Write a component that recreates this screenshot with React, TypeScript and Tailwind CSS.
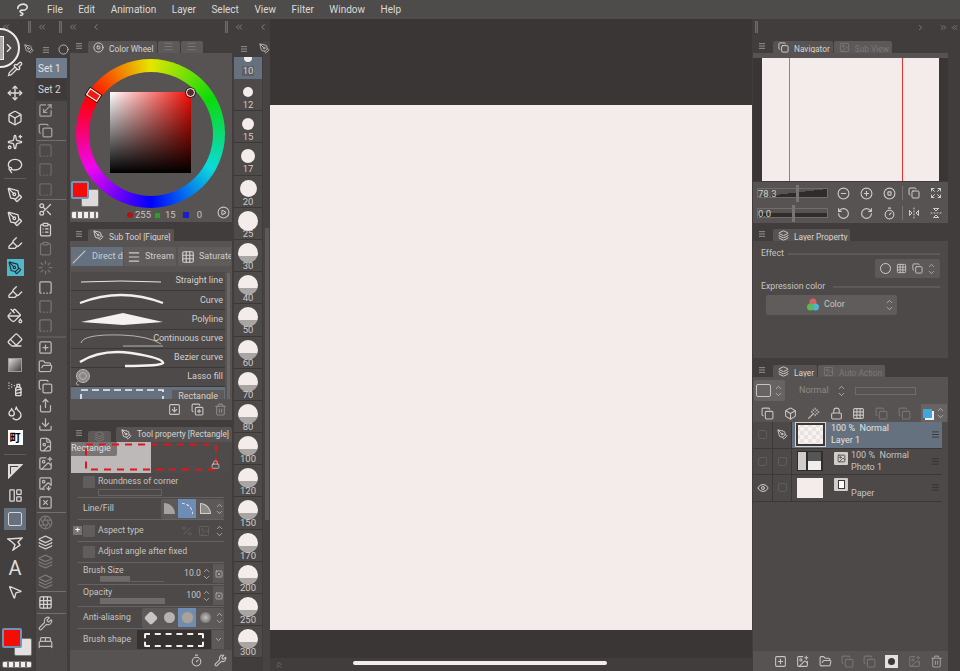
import {
  Pipette, Move, Box, Lasso, PenTool, Highlighter, PaintBucket, Eraser, SprayCan, Droplets, Wand,
  LayoutPanelLeft, MousePointer2, Scissors, ClipboardList, Clipboard, Loader, SquareDashedBottom,
  SquarePlus, FolderOpen, Copy, Share, Download, FileImage, ImagePlus, SquareX, Aperture, Layers,
  Wrench, BedDouble, Menu, ChevronUp, ChevronDown, ChevronRight, ChevronsLeft, ChevronsRight,
  ChevronLeft, CircleMinus, CirclePlus, CircleStop, RotateCcw, RotateCw, Timer, Scaling, Expand,
  FlipHorizontal2, FlipVertical2, Lock, Eye, Trash2, SquareArrowDown, CopyPlus, CirclePlay,
  Slash, Grid3x3, ImageDown, Image, Percent, Circle, Sparkles,
} from "lucide-react";

const menus = ["File", "Edit", "Animation", "Layer", "Select", "View", "Filter", "Window", "Help"];

const sizes = [
  { n: 12, c: "w-[10px] h-[10px]" },
  { n: 15, c: "w-[12px] h-[12px]" },
  { n: 17, c: "w-[14px] h-[14px]" },
  { n: 20, c: "w-[17px] h-[17px]" },
  { n: 25, c: "w-[20px] h-[20px]" },
  { n: 30, c: "w-[20px] h-[20px]" },
  { n: 40, c: "w-[20px] h-[20px]" },
  { n: 50, c: "w-[20px] h-[20px]" },
  { n: 60, c: "w-[20px] h-[20px]" },
  { n: 70, c: "w-[20px] h-[20px]" },
  { n: 80, c: "w-[20px] h-[20px]" },
  { n: 100, c: "w-[20px] h-[20px]" },
  { n: 120, c: "w-[20px] h-[20px]" },
  { n: 150, c: "w-[20px] h-[20px]" },
  { n: 170, c: "w-[20px] h-[20px]" },
  { n: 200, c: "w-[20px] h-[20px]" },
  { n: 250, c: "w-[20px] h-[20px]" },
  { n: 300, c: "w-[20px] h-[20px]" },
];

function Handle() {
  return <div className="h-[12px] w-[3px] border-x border-[#6d6a68] bg-[#575453]" />;
}

function Updown({ className = "" }: { className?: string }) {
  return (
    <div className={`flex flex-col items-center justify-center -space-y-[2px] text-[#c4c1bf] ${className}`}>
      <ChevronUp size={9} />
      <ChevronDown size={9} />
    </div>
  );
}

function Tab({ children, active = true }: { children: React.ReactNode; active?: boolean }) {
  return (
    <div
      className={`flex h-[12px] items-end gap-[5px] rounded-t-[2px] pr-[3px] pl-[5px] text-[8.3px] leading-[8px] whitespace-nowrap ${
        active ? "bg-[#565352] text-[#d6d3d1]" : "bg-[#5c5958] text-[#7b7876]"
      }`}
    >
      {children}
    </div>
  );
}

function ToolRow({ children }: { children: React.ReactNode }) {
  return <div className="flex h-[24.3px] w-full shrink-0 items-center justify-center pr-[4px]">{children}</div>;
}

function ToolStrip() {
  const ic = "text-[#dedbd9]";
  return (
    <div className="flex w-[34px] shrink-0 flex-col bg-[#423f3e]">
      <div className="flex h-[16px] shrink-0 items-center justify-end">
        <PenTool size={10} className="text-[#bdbab8]" />
      </div>
      <ToolRow><Pipette size={16} className={ic} /></ToolRow>
      <ToolRow><Move size={16} className={ic} /></ToolRow>
      <ToolRow><Box size={16} className={ic} /></ToolRow>
      <ToolRow><Sparkles size={16} className={ic} /></ToolRow>
      <ToolRow><Lasso size={16} className={ic} /></ToolRow>
      <div className="flex h-[4px] shrink-0 items-start pl-[4px]"><div className="h-px w-[22px] bg-[#5e5b5a]" /></div>
      <ToolRow><PenTool size={16} className={ic} /></ToolRow>
      <ToolRow><PenTool size={16} className={ic} /></ToolRow>
      <ToolRow><Highlighter size={16} className={ic} /></ToolRow>
      <ToolRow>
        <div className="flex h-[17px] w-[17px] items-center justify-center bg-[#4fb8cb]">
          <PenTool size={14} className="text-[#1f3238]" />
        </div>
      </ToolRow>
      <ToolRow><Highlighter size={16} className={ic} /></ToolRow>
      <ToolRow><PaintBucket size={16} className={ic} /></ToolRow>
      <ToolRow><Eraser size={16} className={ic} /></ToolRow>
      <ToolRow><div className="h-[14px] w-[14px] border border-[#9d9a98] bg-gradient-to-br from-[#dddbd9] to-[#444140]" /></ToolRow>
      <ToolRow><SprayCan size={16} className={ic} /></ToolRow>
      <ToolRow><Droplets size={16} className={ic} /></ToolRow>
      <ToolRow>
        <div className="flex h-[15px] w-[15px] items-center justify-center bg-white font-['Noto_Sans_CJK_JP',sans-serif] text-[11px] leading-none font-bold text-black">
          町
        </div>
      </ToolRow>
      <div className="flex h-[9px] shrink-0 items-center pl-[4px]"><div className="h-px w-[22px] bg-[#5e5b5a]" /></div>
      <ToolRow>
        <svg width="16" height="16" viewBox="0 0 16 16" className="text-[#dedbd9]" fill="none" stroke="currentColor" strokeWidth="2">
          <path d="M2 14 L2 2 L14 2 Z M5 5 L9 5 L5 9 Z" />
        </svg>
      </ToolRow>
      <ToolRow><LayoutPanelLeft size={15} className={ic} /></ToolRow>
      <ToolRow>
        <div className="flex h-[22px] w-[22px] items-center justify-center bg-[#66717f]">
          <div className="h-[14px] w-[14px] rounded-[2px] border border-[#d8d5d3]" />
        </div>
      </ToolRow>
      <ToolRow>
        <svg width="16" height="14" viewBox="0 0 16 14" className="text-[#dedbd9]" fill="none" stroke="currentColor" strokeWidth="1.4">
          <path d="M1 2 L15 1 L11 5 L13 8 L6 13 L8 8 L5 5 Z" />
        </svg>
      </ToolRow>
      <ToolRow><span className="font-['Roboto',sans-serif] text-[20px] leading-none text-[#dedbd9]">A</span></ToolRow>
      <ToolRow><MousePointer2 size={16} className={ic} /></ToolRow>
      <div className="mt-auto mb-[3px] w-full shrink-0">
        <div className="relative h-[34px]">
          <div className="absolute top-[11px] left-[14px] h-[18px] w-[18px] rounded-[2px] border border-[#777] bg-[#e4e0df]" />
          <div className="absolute top-[1px] left-[2px] h-[20px] w-[20px] rounded-[2px] border-2 border-[#6f93bd] bg-[#f20d05]" />
        </div>
        <div className="mx-[2px] h-[7px] rounded-[2px] border border-[#77746f] bg-[repeating-linear-gradient(90deg,#f1efee_0_4px,#6f6c6b_4px_6px)]" />
      </div>
    </div>
  );
}

function SetRow({ children, h = "h-[19.4px]" }: { children: React.ReactNode; h?: string }) {
  return <div className={`flex ${h} items-center justify-center pr-[12px]`}>{children}</div>;
}

function ToolSets() {
  const sep = <div className="mx-[1px] h-px bg-[#716e6c]" />;
  const g3 = [Clipboard, Loader, SquareDashedBottom, SquareDashedBottom, SquareDashedBottom];
  const g4 = [SquarePlus, FolderOpen, Copy, Share, Download, FileImage, ImagePlus, ImageDown, SquareX];
  return (
    <div className="ml-[2px] flex w-[31px] shrink-0 flex-col">
      <div className="flex h-[17px] shrink-0 items-center justify-between pl-[6px] text-[#bdbab8]">
        <Menu size={8} />
        <Circle size={11} className="-mr-[2px]" />
      </div>
      <div className="flex h-[20px] shrink-0 items-center bg-[#6f7c8d] pl-[2px] text-[10px] text-[#e3e1df]">Set 1</div>
      <div className="mt-[1px] flex h-[20px] shrink-0 items-center bg-[#3d3a39] pl-[2px] text-[10px] text-[#d6d3d1]">Set 2</div>
      <div className="mt-[2px] flex-1 bg-[#4c4948]">
        <SetRow><Scaling size={15} className="text-[#a5a2a0]" /></SetRow>
        <SetRow><Copy size={15} className="text-[#a5a2a0]" /></SetRow>
        {sep}
        {[0, 1, 2].map((i) => (
          <SetRow key={i}><SquareDashedBottom size={15} className="text-[#6b6867]" /></SetRow>
        ))}
        {sep}
        <SetRow><Scissors size={15} className="text-[#d4d1cf]" /></SetRow>
        <SetRow><ClipboardList size={15} className="text-[#d4d1cf]" /></SetRow>
        {g3.map((I, i) => (
          <SetRow key={i}><I size={15} className={i === 2 ? "text-[#bdbab8]" : "text-[#777472]"} /></SetRow>
        ))}
        <div className="mx-[1px] h-[2px] bg-[#5c5958]" />
        {g4.map((I, i) => (
          <SetRow key={i}><I size={15} className="text-[#bdbab8]" /></SetRow>
        ))}
        {sep}
        <SetRow><Aperture size={15} className="text-[#7b7876]" /></SetRow>
        <SetRow><Layers size={15} className="text-[#d0cdcb]" /></SetRow>
        <SetRow><Layers size={15} className="text-[#7b7876]" /></SetRow>
        <SetRow><Layers size={15} className="text-[#7b7876]" /></SetRow>
        {sep}
        <SetRow h="h-[21px]"><Grid3x3 size={15} className="text-[#d4d1cf]" /></SetRow>
        {sep}
        <SetRow><Wrench size={15} className="text-[#bdbab8]" /></SetRow>
        <SetRow><BedDouble size={15} className="text-[#bdbab8]" /></SetRow>
      </div>
    </div>
  );
}

function ColorWheel() {
  return (
    <div className="relative flex h-[169px] flex-col items-center bg-[#565352] pt-[6px] pr-[1px]">
      <div className="relative h-[149px] w-[149px] shrink-0 rounded-full bg-[conic-gradient(hsl(60,100%,45%),hsl(120,90%,45%),hsl(180,90%,45%),hsl(240,100%,50%),hsl(300,95%,48%),hsl(360,100%,50%),hsl(60,100%,45%))]">
        <div className="absolute inset-[12.5px] rounded-full bg-[#565352]" />
        <div className="absolute top-[33px] left-[34px] h-[81px] w-[81px] bg-[linear-gradient(to_top,#000,transparent),linear-gradient(to_right,#fff,#f20d05)]" />
        <div className="absolute top-[28.5px] left-[110px] h-[9px] w-[9px] rounded-full border border-white bg-[#5a2a26] ring-1 ring-black/50" />
        <div className="absolute top-[32px] left-[10.5px] h-[8px] w-[13px] rotate-[33deg] border border-white bg-[#ee1b14] ring-1 ring-black/70" />
      </div>
      <div className="absolute bottom-[14px] left-[1px] h-[27px] w-[30px]">
        <div className="absolute top-[8px] left-[10px] h-[18px] w-[18px] rounded-[2px] border border-[#777] bg-[#dedad9]" />
        <div className="absolute top-0 left-0 h-[18px] w-[18px] rounded-[2px] border-2 border-[#7096c4] bg-[#f20d05]" />
      </div>
      <div className="flex h-[14px] w-full items-center text-[9.5px] text-[#c7c4c2]">
        <div className="ml-[1px] h-[8px] w-[28px] rounded-[2px] border border-[#77746f] bg-[repeating-linear-gradient(90deg,#f1efee_0_4px,#6f6c6b_4px_6px)]" />
        <span className="ml-[28px] h-[6px] w-[6px] rounded-full bg-[#b01512]" />
        <span className="ml-[2px]">255</span>
        <span className="ml-[4px] h-[5px] w-[5px] bg-[#22a32c]" />
        <span className="ml-[5px]">15</span>
        <span className="ml-[7px] h-[6px] w-[6px] bg-[#1b1fc8]" />
        <span className="ml-[8px]">0</span>
        <CirclePlay size={13} className="ml-[15px] -mt-[6px] text-[#c7c4c2]" />
      </div>
    </div>
  );
}

function SubRow({ label, children, selected = false }: { label: string; children?: React.ReactNode; selected?: boolean }) {
  return (
    <div className={`relative flex h-[19.2px] shrink-0 items-center justify-end border-b border-[#3b3837] pr-[1px] text-[9px] ${selected ? "bg-[#66717f]" : "bg-[#4d4a49]"}`}>
      <svg width="100" height="19" viewBox="0 0 100 19" className="absolute top-0 left-0">{children}</svg>
      <span className={`relative rounded-[1px] px-[1px] text-[#d4d0ce] ${selected ? "mt-[2px] bg-[#5c5a5a] px-[6px]" : ""}`}>{label}</span>
    </div>
  );
}

function SubTool() {
  return (
    <div className="flex shrink-0 flex-col">
      <div className="flex h-[13px] items-end gap-[5px] pl-[5px]">
        <Menu size={8} className="mb-[3px] text-[#bdbab8]" />
        <Tab>
          <PenTool size={11} />
          <span>Sub Tool [Figure]</span>
        </Tab>
      </div>
      <div className="flex h-[26px] items-end gap-[1px] bg-[#565352] px-[1px] pb-[1px] text-[9px] text-[#d0cdcb]">
        <div className="flex h-[19px] w-[52px] items-center overflow-hidden bg-[#66717f] pl-[1px] whitespace-nowrap">
          <Slash size={14} className="shrink-0 text-[#c9c6c4]" />
          <span className="ml-[6px]">Direct d</span>
        </div>
        <div className="flex h-[19px] w-[52px] items-center overflow-hidden bg-[#5f5c5b] pl-[3px] whitespace-nowrap">
          <Menu size={14} className="shrink-0" />
          <span className="ml-[4px]">Stream l</span>
        </div>
        <div className="ml-[1px] flex h-[19px] w-[53px] items-center overflow-hidden bg-[#5f5c5b] pl-[3px] whitespace-nowrap">
          <Grid3x3 size={14} className="shrink-0" />
          <span className="ml-[4px]">Saturate</span>
        </div>
      </div>
      <div className="flex h-[132px] gap-[2px] overflow-hidden bg-[#565352] pt-[5px] pl-[1px]">
        <div className="flex min-w-0 flex-1 flex-col overflow-hidden">
          <SubRow label="Straight line"><path d="M10 10 Q50 8 90 10" stroke="#e9e6e4" strokeWidth="1" fill="none" /></SubRow>
          <SubRow label="Curve"><path d="M9 12 Q50 -4 92 12" stroke="#f1eeec" strokeWidth="2.4" fill="none" /></SubRow>
          <SubRow label="Polyline"><path d="M10 12 L52 3 L92 12 L52 15 Z" fill="#f4f1ef" /></SubRow>
          <SubRow label="Continuous curve">
            <path d="M10 13 Q12 4 50 5 Q78 6 90 14 M52 16 H92" stroke="#cfccca" strokeWidth="0.8" fill="none" />
          </SubRow>
          <SubRow label="Bezier curve">
            <path d="M9 13 Q30 0 60 4 Q92 9 92 14 Q90 17 54 17" stroke="#f4f1ef" strokeWidth="2.6" fill="none" />
          </SubRow>
          <SubRow label="Lasso fill">
            <circle cx="12" cy="8" r="6.5" fill="#8a8786" stroke="#cfccca" strokeWidth="0.8" />
            <circle cx="12" cy="8" r="3.5" fill="none" stroke="#cfccca" strokeWidth="0.6" />
            <path d="M7 13 Q3 17 8 17" stroke="#cfccca" strokeWidth="0.7" fill="none" />
          </SubRow>
          <SubRow label="Rectangle" selected>
            <path d="M10 14 V3 H92 V14" stroke="#f4f1ef" strokeWidth="1.6" strokeDasharray="7 4" fill="none" />
          </SubRow>
        </div>
        <div className="mt-[1px] mr-[2px] w-[3px] bg-[#6a6766]" />
      </div>
      <div className="flex h-[21px] items-center justify-end gap-[10px] bg-[#565352] pr-[5px] text-[#c7c4c2]">
        <SquareArrowDown size={13} />
        <CopyPlus size={13} />
        <Trash2 size={13} className="text-[#8d8a88]" />
      </div>
    </div>
  );
}

function PropRow({ h, children, sep = true }: { h: string; children: React.ReactNode; sep?: boolean }) {
  return (
    <div className={`flex items-center text-[8.7px] text-[#c7c4c2] ${h} ${sep ? "mx-[8px] border-b border-[#666362]" : "mx-[8px]"}`}>
      {children}
    </div>
  );
}

function Checkbox() {
  return <div className="h-[12px] w-[12px] rounded-[1px] bg-[#605d5c]" />;
}

function ToolProperty() {
  return (
    <div className="flex flex-1 flex-col">
      <div className="mt-[7px] flex h-[15px] shrink-0 items-end gap-[5px] pl-[5px]">
        <Menu size={8} className="mb-[5px] text-[#bdbab8]" />
        <div className="flex w-[23px] justify-center rounded-t-[2px] bg-[#5c5958] text-[#7b7876]">
          <Layers size={11} />
        </div>
        <div className="flex h-[15px] items-center gap-[5px] rounded-t-[2px] bg-[#565352] pr-[3px] pl-[5px] text-[8.3px] whitespace-nowrap text-[#d6d3d1]">
          <PenTool size={11} />
          <span>Tool property [Rectangle]</span>
        </div>
      </div>
      <div className="flex flex-1 flex-col bg-[#4c4948]">
        <div className="relative ml-[1px] flex h-[31px] w-[160px] bg-[#4e4b4a]">
          <div className="w-[80px] bg-[#bdb9b9]" />
          <div className="absolute top-0 left-0 h-[14px] w-[46px] rounded-br-[2px] bg-[#787574] text-[9px] leading-[13px] text-[#ddd]">Rectangle</div>
          <svg width="160" height="31" viewBox="0 0 160 31" className="absolute top-0 left-0">
            <rect x="15" y="2.5" width="130" height="25" stroke="#e3141a" strokeWidth="2" strokeDasharray="7 6" fill="none" />
          </svg>
          <Lock size={9} className="absolute right-[11px] bottom-[4px] text-[#d0cdcb]" />
        </div>
        <div className="mx-[8px] flex h-[25px] flex-col items-start border-b border-[#666362] pt-[2px] pl-[5px] text-[8.7px] text-[#c7c4c2]">
          <div className="flex items-center gap-[3px]"><Checkbox /><span>Roundness of corner</span></div>
          <div className="mt-[1px] ml-[15px] h-[7px] w-[64px] border border-[#666362]" />
        </div>
        <PropRow h="h-[22px]">
          <span className="ml-[5px]">Line/Fill</span>
          <div className="ml-auto flex h-[20px] items-center rounded-[2px] bg-[#5c5958]">
            <div className="flex h-[19px] w-[17px] items-center justify-center"><div className="h-[11px] w-[11px] rounded-tr-[11px] bg-[#a5a2a0]" /></div>
            <div className="flex h-[19px] w-[18px] items-center justify-center bg-[#6e8db5]"><div className="h-[11px] w-[11px] rounded-tr-[11px] border-t border-r border-dashed border-[#eee]" /></div>
            <div className="flex h-[19px] w-[18px] items-center justify-center"><div className="h-[11px] w-[11px] rounded-tr-[11px] border border-[#d0cdcb] bg-[#8d8a88]" /></div>
            <Updown className="w-[10px]" />
          </div>
        </PropRow>
        <PropRow h="h-[22px]">
          <div className="-ml-[5px] flex h-[9px] w-[9px] items-center justify-center bg-[#777472] text-[9px] leading-none text-white">+</div>
          <div className="ml-[1px]"><Checkbox /></div>
          <span className="ml-[3px]">Aspect type</span>
          <div className="ml-auto flex items-center gap-[5px] text-[#625f5e]">
            <Percent size={12} />
            <Image size={12} />
            <Updown className="w-[9px]" />
          </div>
        </PropRow>
        <PropRow h="h-[21px]">
          <div className="ml-[5px]"><Checkbox /></div>
          <span className="ml-[3px]">Adjust angle after fixed</span>
        </PropRow>
        <PropRow h="h-[22px]">
          <div className="ml-[5px] flex-1 self-start pt-[2px]">
            <div className="leading-[11px]">Brush Size</div>
            <div className="ml-[17px] flex h-[6px] w-[64px] border-b border-[#666362]"><div className="w-[30px] bg-[#6e6b6a]" /></div>
          </div>
          <span className="mr-[1px]">10.0</span>
          <Updown className="w-[9px]" />
          <div className="ml-[2px] flex h-[19px] w-[11px] items-center justify-center bg-[#5c5958]"><SquareX size={8} /></div>
        </PropRow>
        <PropRow h="h-[22px]">
          <div className="ml-[5px] flex-1 self-start pt-[2px]">
            <div className="leading-[11px]">Opacity</div>
            <div className="ml-[17px] flex h-[6px] w-[65px]"><div className="w-full bg-[#6e6b6a]" /></div>
          </div>
          <span className="mr-[1px]">100</span>
          <Updown className="w-[9px]" />
          <div className="ml-[2px] flex h-[19px] w-[11px] items-center justify-center bg-[#5c5958]"><SquareX size={8} /></div>
        </PropRow>
        <PropRow h="h-[22px]">
          <span className="ml-[5px]">Anti-aliasing</span>
          <div className="ml-auto flex h-[20px] items-center rounded-[2px] bg-[#5c5958]">
            <div className="flex h-[19px] w-[18px] items-center justify-center"><div className="h-[10px] w-[10px] rotate-45 rounded-[2px] bg-[#c7c4c2]" /></div>
            <div className="flex h-[19px] w-[18px] items-center justify-center"><div className="h-[11px] w-[11px] rounded-full bg-[#b5b2b0]" /></div>
            <div className="flex h-[19px] w-[18px] items-center justify-center bg-[#6e8db5]"><div className="h-[11px] w-[11px] rounded-full bg-[#a5a2a0] ring-1 ring-[#908d8b]" /></div>
            <div className="flex h-[19px] w-[18px] items-center justify-center"><div className="h-[11px] w-[11px] rounded-full bg-[radial-gradient(#c4c1bf,#5c5958)]" /></div>
            <Updown className="w-[10px]" />
          </div>
        </PropRow>
        <PropRow h="h-[21px]" sep={false}>
          <span className="ml-[5px]">Brush shape</span>
          <div className="ml-auto flex h-[19px] w-[74px] items-center justify-center bg-[#353231]">
            <div className="h-[14px] w-[60px] rounded-[2px] border-2 border-dashed border-[#f1eeec]" />
          </div>
          <div className="ml-[1px] flex h-[19px] w-[12px] items-center justify-center bg-[#5c5958]"><ChevronDown size={9} /></div>
        </PropRow>
        <div className="mt-auto flex h-[21px] items-center justify-end gap-[11px] bg-[#565352] pr-[5px] text-[#c7c4c2]">
          <Timer size={13} />
          <Wrench size={13} />
        </div>
      </div>
    </div>
  );
}

function BrushSizes() {
  return (
    <div className="ml-[2px] flex w-[28px] shrink-0 flex-col overflow-hidden">
      <div className="flex h-[16px] shrink-0 items-center pl-[6px]">
        <Menu size={8} className="text-[#bdbab8]" />
      </div>
      <div className="flex h-[22px] shrink-0 flex-col items-center overflow-hidden bg-[#66717f]">
        <div className="-mt-[3px] h-[8px] w-[8px] shrink-0 rounded-full bg-[#f4ecea]" />
        <span className="mt-[4px] bg-[#5c5f66] px-[1px] text-[9.5px] leading-[10px] text-[#d4d0ce]">10</span>
      </div>
      {sizes.map((s) => (
        <div key={s.n} className="h-[32.2px] shrink-0 overflow-hidden border-b border-[#3b3837] bg-[#4d4a49]">
          <div className="flex h-[26px] items-center justify-center">
            <div className={`${s.c} shrink-0 rounded-full ${s.n >= 30 ? "bg-[linear-gradient(#f4ecea_0_66%,#a9a5a3_66%)]" : "bg-[#f4ecea]"}`} />
          </div>
          <div className="relative -mt-[5px] text-center text-[9.5px] leading-[10px] text-[#cfccca]">{s.n}</div>
        </div>
      ))}
    </div>
  );
}

function Navigator() {
  return (
    <div className="flex flex-col">
      <div className="flex h-[12px] items-end gap-[7px] pl-[5px]">
        <Menu size={8} className="mb-[3px] text-[#bdbab8]" />
        <div className="flex gap-[1px]">
          <Tab><Copy size={11} /><span>Navigator</span></Tab>
          <Tab active={false}><Image size={11} /><span>Sub View</span></Tab>
        </div>
      </div>
      <div className="h-[5px] bg-[#565352]" />
      <div className="flex h-[123px] bg-[#393635] px-[9px]">
        <div className="flex h-full flex-1 bg-[#f4ecea] pl-[27px]">
          <div className="w-[1px] bg-[#ef5a57]" />
          <div className="w-[112px]" />
          <div className="w-[1px] bg-[#e8322e]" />
        </div>
      </div>
      <div className="mt-[1px] flex h-[41px] flex-col justify-center gap-[2px] bg-[#565352] px-[4px] pt-[1px] text-[9.5px] text-[#d0cdcb]">
        <div className="flex h-[18px] items-center">
          <div className="relative h-[10px] w-[71px] border border-[#6f6c6b] bg-[linear-gradient(to_bottom_right,transparent_50%,#2f2c2b_50%)] leading-[9px]">78.3
            <div className="absolute -top-[4px] left-[38px] h-[17px] w-[3px] bg-[#777472]" />
          </div>
          <CircleMinus size={13} className="ml-[9px]" />
          <CirclePlus size={13} className="ml-[10px]" />
          <CircleStop size={13} className="ml-[10px]" />
          <div className="ml-[6px] h-[14px] w-px bg-[#777472]" />
          <Copy size={12} className="ml-[5px]" />
          <Expand size={12} className="ml-[10px]" />
        </div>
        <div className="flex h-[18px] items-center">
          <div className="relative h-[10px] w-[71px] border border-[#6f6c6b] bg-[linear-gradient(to_top,#2f2c2b_50%,transparent_50%)] leading-[9px]">0.0
            <div className="absolute -top-[4px] left-[34px] h-[17px] w-[3px] bg-[#777472]" />
          </div>
          <RotateCcw size={13} className="ml-[9px]" />
          <RotateCw size={13} className="ml-[10px]" />
          <Timer size={13} className="ml-[10px]" />
          <div className="ml-[6px] h-[14px] w-px bg-[#777472]" />
          <FlipHorizontal2 size={12} className="ml-[5px]" />
          <FlipVertical2 size={12} className="ml-[10px]" />
        </div>
      </div>
    </div>
  );
}

function LayerProperty() {
  return (
    <div className="mt-[6px] flex flex-col">
      <div className="flex h-[12px] items-end gap-[7px] pl-[5px]">
        <Menu size={8} className="mb-[3px] text-[#bdbab8]" />
        <Tab><Layers size={11} /><span>Layer Property</span></Tab>
      </div>
      <div className="h-[117px] bg-[#4c4948] px-[5px] pt-[7px] text-[8.7px] text-[#c7c4c2]">
        <div className="flex h-[11px] items-center gap-[4px] pl-[3px]">
          <span>Effect</span>
          <div className="mr-[3px] h-[2px] flex-1 bg-[#5c5958]" />
        </div>
        <div className="mr-[3px] ml-auto flex h-[19px] w-[65px] items-center justify-around rounded-[2px] bg-[#5c5958] px-[2px]">
          <div className="h-[11px] w-[11px] rounded-full border border-[#d0cdcb]" />
          <Grid3x3 size={11} />
          <Copy size={11} />
          <Updown className="w-[8px]" />
        </div>
        <div className="mt-[3px] flex h-[11px] items-center gap-[8px] pl-[3px]">
          <span>Expression color</span>
          <div className="mr-[3px] h-[2px] flex-1 bg-[#5c5958]" />
        </div>
        <div className="mt-[3px] ml-[8px] flex h-[20px] w-[131px] items-center rounded-[2px] bg-[#5f5c5b] pr-[3px]">
          <svg width="14" height="14" viewBox="0 0 14 14" className="ml-[40px]">
            <circle cx="7" cy="4" r="3.5" fill="#d9605c" />
            <circle cx="9.5" cy="9" r="3.5" fill="#4fb3d1" />
            <circle cx="4.5" cy="9" r="3.5" fill="#5cb85c" />
          </svg>
          <span className="ml-[4px]">Color</span>
          <Updown className="ml-auto" />
        </div>
      </div>
    </div>
  );
}

function LayerRow({ children, selected = false, eye = false, pen = false }: { children: React.ReactNode; selected?: boolean; eye?: boolean; pen?: boolean }) {
  return (
    <div className="mr-[6px] flex h-[26.5px] border-b border-[#3b3837] text-[9px] leading-[11px]">
      <div className="flex w-[20px] items-center justify-center border-r border-[#3b3837]">
        {eye ? <Eye size={12} className="text-[#d0cdcb]" /> : <div className="h-[9px] w-[9px] rounded-[2px] border border-[#5f5c5b]" />}
      </div>
      <div className="flex w-[19px] items-center justify-center border-r border-[#3b3837]">
        {pen ? <PenTool size={11} className="text-[#d0cdcb]" /> : <div className="h-[9px] w-[9px] rounded-[2px] border border-[#5f5c5b]" />}
      </div>
      <div className={`flex flex-1 items-center pr-[2px] ${selected ? "bg-[#66717f]" : ""}`}>{children}</div>
    </div>
  );
}

function LayerPanel() {
  return (
    <div className="mt-[7px] flex flex-1 flex-col">
      <div className="flex h-[12px] items-end gap-[7px] pl-[5px]">
        <Menu size={8} className="mb-[3px] text-[#bdbab8]" />
        <div className="flex gap-[1px]">
          <Tab><Layers size={11} /><span>Layer</span></Tab>
          <Tab active={false}><Image size={11} /><span>Auto Action</span></Tab>
        </div>
      </div>
      <div className="flex flex-1 flex-col bg-[#4c4948]">
        <div className="flex h-[27px] items-center bg-[#565352] pr-[2px] pl-[1px] text-[9px] text-[#8d8a88]">
          <div className="flex h-[21px] w-[31px] items-center justify-around rounded-[2px] bg-[#666362]">
            <div className="h-[13px] w-[15px] rounded-[2px] border border-[#c7c4c2]" />
            <Updown />
          </div>
          <span className="ml-[14px]">Normal</span>
          <Updown className="ml-[8px]" />
          <div className="ml-[9px] h-[8px] w-[61px] border border-[#6f6c6b]" />
        </div>
        <div className="flex h-[18px] items-center justify-between bg-[#565352] pr-[1px] pl-[8px] text-[#c7c4c2]">
          <Copy size={13} />
          <Box size={13} />
          <Wand size={13} />
          <Lock size={13} />
          <Grid3x3 size={13} />
          <Copy size={13} className="text-[#777472]" />
          <Copy size={13} className="text-[#777472]" />
          <div className="flex h-[18px] w-[26px] items-center justify-around bg-[#666362]">
            <div className="h-[9px] w-[9px] bg-[#41a6d8] shadow-[2px_2px_0_#eee]" />
            <Updown />
          </div>
        </div>
        <LayerRow selected pen>
          <div className="ml-[3px] h-[25px] w-[31px] shrink-0 border border-[#d5d2d0] bg-[repeating-conic-gradient(#e8e2e0_0_25%,#f7f2f0_0_50%)] bg-[length:8px_8px] outline-2 -outline-offset-3 outline-[#3b3837]" />
          <div className="ml-[5px] flex-1 text-[#e3e1df]">
            <div>100 %&nbsp; Normal</div>
            <div className="mt-[1px]">Layer 1</div>
          </div>
          <Menu size={9} className="text-[#2f2c2b]" />
        </LayerRow>
        <LayerRow>
          <div className="ml-[5px] flex h-[20px] w-[26px] shrink-0 bg-[#2f2c2b] p-[1px]">
            <div className="w-[8px] bg-[#d0cdcb]" />
            <div className="ml-[2px] w-[13px] bg-[linear-gradient(to_top,#eee_50%,#555_50%)]" />
          </div>
          <div className="mb-[6px] ml-[11px] flex h-[13px] w-[14px] shrink-0 items-center justify-center rounded-[1px] bg-[#d0cdcb]"><Image size={9} className="text-[#3b3837]" /></div>
          <div className="ml-[3px] flex-1 text-[#c7c4c2]">
            <div>100 %&nbsp; Normal</div>
            <div className="mt-[1px]">Photo 1</div>
          </div>
          <Menu size={9} className="text-[#2f2c2b]" />
        </LayerRow>
        <LayerRow eye>
          <div className="ml-[5px] h-[20px] w-[26px] shrink-0 bg-[#f4ecea]" />
          <div className="mb-[6px] ml-[11px] flex h-[13px] w-[14px] shrink-0 items-center justify-center rounded-[1px] bg-[#d0cdcb]"><div className="h-[9px] w-[7px] border border-[#3b3837] bg-white" /></div>
          <div className="ml-[3px] flex-1 self-end pb-[2px] text-[#c7c4c2]">Paper</div>
          <Menu size={9} className="text-[#2f2c2b]" />
        </LayerRow>
        <div className="mt-auto flex h-[20px] items-center justify-end gap-[9.3px] bg-[#565352] pr-[5px] text-[#c7c4c2]">
          <SquarePlus size={13} />
          <ImagePlus size={13} />
          <FolderOpen size={13} />
          <Copy size={13} className="text-[#777472]" />
          <Copy size={13} className="text-[#777472]" />
          <div className="flex h-[13px] w-[13px] items-center justify-center bg-[#e3e1df]"><div className="h-[7px] w-[7px] rounded-full bg-[#3b3837]" /></div>
          <ImagePlus size={13} className="text-[#777472]" />
          <Trash2 size={13} className="text-[#9d9a98]" />
        </div>
      </div>
    </div>
  );
}

export default function App() {
  return (
    <div className="relative flex h-[671px] w-[960px] flex-col overflow-hidden bg-[#403d3c] font-['Roboto',sans-serif]">
      {/* menu bar */}
      <div className="flex h-[19px] shrink-0 items-center bg-[#4e4c4b] pl-[15px] text-[10px] text-[#dcd9d7]">
        <svg width="15" height="14" viewBox="0 0 15 14" fill="none" stroke="#e4e1df" strokeWidth="1.6" className="mr-[17px]">
          <path d="M3 6 C2 2 8 0 11 2 C14 4 11 8 7 7 C5 7 4 9 7 10 C9 11 7 13 5 12" />
        </svg>
        <div className="flex gap-[15.5px]">
          {menus.map((m) => (
            <span key={m}>{m}</span>
          ))}
        </div>
      </div>

      <div className="flex h-[652px]">
        {/* left docks */}
        <div className="flex w-[270px] shrink-0 flex-col">
          <div className="flex h-[16px] shrink-0 items-center pl-[1px] text-[#8d8a88]">
            <ChevronsLeft size={10} />
            <div className="ml-[17px]"><Handle /></div>
            <ChevronsLeft size={10} className="ml-[6px]" />
            <div className="ml-[12px]"><Handle /></div>
            <ChevronsLeft size={10} className="ml-[6px]" />
            <ChevronLeft size={10} className="ml-[13px]" />
            <div className="ml-[124px]"><Handle /></div>
            <ChevronsLeft size={10} className="ml-[6px]" />
            <ChevronLeft size={10} className="ml-[14px]" />
          </div>
          <div className="h-[6px] shrink-0" />
          <div className="flex flex-1 overflow-hidden">
            <ToolStrip />
            <ToolSets />
            <div className="ml-[3px] flex w-[162px] shrink-0 flex-col">
              <div className="flex h-[12px] shrink-0 items-end gap-[5px] pl-[5px]">
                <Menu size={8} className="mb-[3px] text-[#bdbab8]" />
                <div className="flex gap-[1px]">
                  <Tab><CircleStop size={11} /><span>Color Wheel</span></Tab>
                  <div className="flex w-[22px] justify-center rounded-t-[2px] bg-[#5c5958] text-[#7b7876]"><Menu size={11} /></div>
                  <div className="flex w-[22px] justify-center rounded-t-[2px] bg-[#5c5958] text-[#7b7876]"><Menu size={11} /></div>
                </div>
              </div>
              <ColorWheel />
              <div className="h-[6px] shrink-0" />
              <SubTool />
              <ToolProperty />
            </div>
            <BrushSizes />
            <div className="relative ml-[1px] flex flex-1 flex-col bg-[#464342] pt-[187px]">
              <PenTool size={11} className="absolute top-[2px] -left-[4px] text-[#bdbab8]" />
              <div className="mx-auto h-[292px] w-[4px] bg-[#5c5958]" />
            </div>
          </div>
        </div>

        {/* canvas */}
        <div className="flex min-w-0 flex-1 flex-col bg-[#393635]">
          <div className="h-[86px] shrink-0" />
          <div className="h-[525px] shrink-0 bg-[#f4ecea]" />
          <div className="h-[28px] shrink-0" />
          <div className="flex flex-1 items-center bg-[#403d3c] pl-[4px] text-[#777472]">
            <ChevronsRight size={10} className="-rotate-90" />
          </div>
        </div>

        {/* right docks */}
        <div className="flex w-[208px] shrink-0 flex-col">
          <div className="flex h-[16px] shrink-0 items-center pr-[1px] pl-[3px] text-[#8d8a88]">
            <Handle />
            <ChevronRight size={9} className="mr-[14px] ml-auto" />
            <ChevronsRight size={9} />
            <ChevronsLeft size={9} className="ml-[2px]" />
          </div>
          <div className="h-[6px] shrink-0" />
          <div className="flex flex-1 flex-col pl-[1px]">
            <div className="flex w-[195px] flex-1 flex-col">
              <Navigator />
              <LayerProperty />
              <LayerPanel />
            </div>
          </div>
        </div>
      </div>

      {/* assistive overlay + home indicator */}
      <div className="absolute top-[28px] -left-[20px] flex h-[40px] w-[40px] items-center justify-end rounded-full border-2 border-[#ecebea] bg-[#4d4a49] pr-[2px] text-[#ecebea]">
        <div className="absolute top-[6px] left-[17px] h-[24px] w-[5px] border border-[#ecebea] bg-[#aaa]" />
        <ChevronRight size={14} />
      </div>
      <div className="absolute bottom-[6px] left-[353px] h-[4px] w-[254px] rounded-full bg-[#f4ecea]" />
    </div>
  );
}
